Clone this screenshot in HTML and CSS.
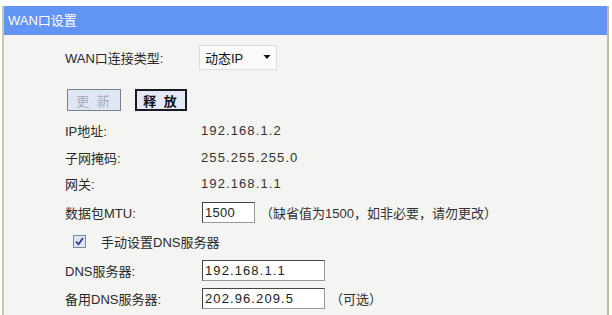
FILE: index.html
```html
<!DOCTYPE html>
<html lang="zh-CN">

<head>
    <meta charset="UTF-8">
    <title>WAN口设置</title>
    <link rel="stylesheet" href="styles.css">
</head>

<body>
    <div class="panel">
        <div class="panel-title">WAN口设置</div>
        <div class="panel-body">
            <div class="row row-type">
                <span class="label">WAN口连接类型:</span>
                <div class="select">
                    <span>动态IP</span>
                    <svg class="arrow" width="9" height="5" viewBox="0 0 9 5"><path d="M0 0h9L4.5 5z" fill="#111"/></svg>
                </div>
            </div>
            <div class="row row-buttons">
                <button class="btn btn-disabled">更 新</button>
                <button class="btn btn-active">释 放</button>
            </div>
            <div class="row">
                <span class="label">IP地址:</span>
                <span class="value">192.168.1.2</span>
            </div>
            <div class="row row-short">
                <span class="label">子网掩码:</span>
                <span class="value">255.255.255.0</span>
            </div>
            <div class="row row-short">
                <span class="label">网关:</span>
                <span class="value">192.168.1.1</span>
            </div>
            <div class="row row-mtu">
                <span class="label">数据包MTU:</span>
                <input class="field field-small" type="text" value="1500">
                <span class="note">（缺省值为1500，如非必要，请勿更改）</span>
            </div>
            <div class="row row-check">
                <span class="checkbox">
                    <svg width="9" height="9" viewBox="0 0 9 9"><path d="M1 4.5l2.5 2.8L8 1" stroke="#2d3f8f" stroke-width="1.8" fill="none"/></svg>
                </span>
                <span class="check-text">手动设置DNS服务器</span>
            </div>
            <div class="row">
                <span class="label">DNS服务器:</span>
                <input class="field" type="text" value="192.168.1.1">
            </div>
            <div class="row">
                <span class="label">备用DNS服务器:</span>
                <input class="field" type="text" value="202.96.209.5">
                <span class="note">（可选）</span>
            </div>
        </div>
    </div>
</body>

</html>
```

FILE: styles.css
```css
body {
    margin: 0;
    padding-top: 6px;
    background-color: #fff;
    font-family: "Liberation Sans", "Noto Sans CJK SC", sans-serif;
    font-size: 13px;
    color: #2a2a2a;
}

.panel {
    margin-left: 2px;
    width: 603px;
    height: 309px;
    background-color: #f4f4f2;
    border-left: 2px solid #cfc6a4;
    border-right: 2px solid #c4bb98;
    overflow: hidden;
}

.panel-title {
    height: 29px;
    line-height: 29px;
    padding-left: 6px;
    background-color: #6194f5;
    color: #fff;
    font-size: 13px;
    border-radius: 4px 0 0 0;
    margin-left: -2px;
}

.panel-body {
    padding: 8px 0 0 61px;
}

.row {
    display: flex;
    align-items: center;
    height: 28px;
}

.row-type {
    margin-bottom: 15px;
}

.row-buttons {
    margin-bottom: 2px;
    padding-left: 2px;
    gap: 14px;
}

.row-short {
    height: 26px;
}

.row-mtu {
    height: 30px;
    margin-top: 1px;
}

.row-check {
    height: 29px;
    padding-left: 8px;
}

.label {
    width: 136px;
    flex-shrink: 0;
}

.value {
    color: #333;
    letter-spacing: 1.1px;
}

.select {
    display: flex;
    align-items: center;
    justify-content: space-between;
    width: 66px;
    height: 23px;
    padding: 0 5px 0 5px;
    margin-left: -2px;
    background-color: #fbfbfb;
    border: 1px solid #dcdcdc;
    color: #111;
}

.arrow {
    width: 8px;
    height: 4px;
}

.btn {
    height: 22px;
    width: 54px;
    padding: 0;
    font-family: "Liberation Sans", "Noto Sans CJK SC", sans-serif;
    font-size: 13px;
    letter-spacing: 2px;
}

.btn-disabled {
    background-color: #dfe6f4;
    border: 1px solid #7c7f8a;
    color: #a7adbf;
}

.btn-active {
    width: 52px;
    background-color: #e4e9f5;
    border: 2px solid #1a1a24;
    color: #111;
    font-weight: bold;
}

.field {
    width: 117px;
    height: 19px;
    padding: 0 2px;
    margin: 0 0 0 1px;
    border: 1px solid #444;
    border-right-color: #999;
    border-bottom-color: #999;
    background-color: #fff;
    font-family: "Liberation Sans", "Noto Sans CJK SC", sans-serif;
    font-size: 13px;
    letter-spacing: 1.1px;
    color: #222;
}

.field-small {
    width: 47px;
    letter-spacing: 0.3px;
}

.note {
    margin-left: 5px;
    color: #333;
}

.checkbox {
    display: flex;
    align-items: center;
    justify-content: center;
    width: 11px;
    height: 11px;
    border: 1px solid #7a8aa8;
    background-color: #dfe5f3;
}

.check-text {
    margin-left: 15px;
}
```
